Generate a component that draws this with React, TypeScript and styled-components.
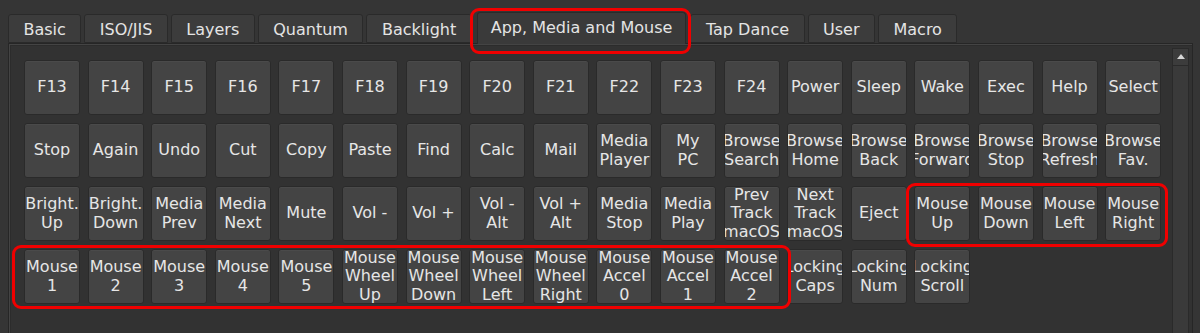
import styled, { createGlobalStyle } from "styled-components";

const GlobalStyle = createGlobalStyle`
  html, body {
    margin: 0;
    padding: 0;
    background: #353535;
  }
  body {
    font-family: "DejaVu Sans", "Liberation Sans", sans-serif;
    font-size: 16px;
    color: #e2e2e2;
    overflow: hidden;
  }
`;

const tabs = [
  "Basic",
  "ISO/JIS",
  "Layers",
  "Quantum",
  "Backlight",
  "App, Media and Mouse",
  "Tap Dance",
  "User",
  "Macro",
];
const activeTab = "App, Media and Mouse";

const keys = [
  "F13", "F14", "F15", "F16", "F17", "F18", "F19", "F20", "F21", "F22", "F23", "F24",
  "Power", "Sleep", "Wake", "Exec", "Help", "Select",
  "Stop", "Again", "Undo", "Cut", "Copy", "Paste", "Find", "Calc", "Mail",
  "Media\nPlayer", "My\nPC", "Browse\nSearch", "Browse\nHome", "Browse\nBack",
  "Browse\nForward", "Browse\nStop", "Browse\nRefresh", "Browse\nFav.",
  "Bright.\nUp", "Bright.\nDown", "Media\nPrev", "Media\nNext", "Mute", "Vol -", "Vol +",
  "Vol -\nAlt", "Vol +\nAlt", "Media\nStop", "Media\nPlay", "Prev\nTrack\nmacOS",
  "Next\nTrack\nmacOS", "Eject", "Mouse\nUp", "Mouse\nDown", "Mouse\nLeft", "Mouse\nRight",
  "Mouse\n1", "Mouse\n2", "Mouse\n3", "Mouse\n4", "Mouse\n5",
  "Mouse\nWheel\nUp", "Mouse\nWheel\nDown", "Mouse\nWheel\nLeft", "Mouse\nWheel\nRight",
  "Mouse\nAccel\n0", "Mouse\nAccel\n1", "Mouse\nAccel\n2",
  "Locking\nCaps", "Locking\nNum", "Locking\nScroll",
];

// red annotation boxes drawn over the screenshot
const highlights = [
  { x: 470, y: 8, w: 221, h: 46 },
  { x: 906, y: 183, w: 262, h: 64 },
  { x: 12, y: 245, w: 779, h: 64 },
];

function App() {
  return (
    <Page>
      <GlobalStyle />
      <TabBar>
        {tabs.map(t => (
          <Tab key={t} $active={t === activeTab}>{t}</Tab>
        ))}
      </TabBar>
      <Panel>
        <KeyGrid>
          {keys.map((k, i) => (
            <Key key={i}>
              <KeyLabel>{k}</KeyLabel>
            </Key>
          ))}
        </KeyGrid>
        <ScrollBar>
          <ScrollArrow />
          <ScrollTrack />
        </ScrollBar>
      </Panel>
      {highlights.map((h, i) => (
        <Highlight key={i} $x={h.x} $y={h.y} $w={h.w} $h={h.h} />
      ))}
    </Page>
  );
}

export default App;

const Page = styled.div`
  position: relative;
  width: 1200px;
  height: 333px;
  padding: 12px 7px 0 8px;
  box-sizing: border-box;
`;

const TabBar = styled.div`
  display: flex;
  align-items: flex-end;
  gap: 3px;
  height: 31px;
  position: relative;
  z-index: 1;
`;

const Tab = styled.div<{ $active?: boolean }>`
  box-sizing: border-box;
  display: flex;
  align-items: center;
  height: ${p => (p.$active ? "32px" : "29px")};
  margin: ${p => (p.$active ? "0 1px -1px 2px" : "0")};
  padding: ${p => (p.$active ? "0 13px 3px" : "2px 14.5px 0")};
  background: ${p => (p.$active ? "#3a3a3a" : "#3c3c3c")};
  border: 1px solid #2a2a2a;
  border-bottom: ${p => (p.$active ? "none" : "1px solid #2a2a2a")};
  border-radius: 3px 3px 0 0;
  color: #e4e4e4;
  white-space: nowrap;
`;

const Panel = styled.div`
  display: flex;
  height: 300px;
  background: #323232;
  border: 1px solid #262626;
  box-shadow: inset 1px 1px 0 #444, inset 2px 2px 0 #2c2c2c;
  padding: 16px 3px 0 15px;
  box-sizing: border-box;
`;

const KeyGrid = styled.div`
  flex: 1;
  display: grid;
  grid-template-columns: repeat(18, 56px);
  grid-auto-rows: 55px;
  column-gap: 7.6px;
  row-gap: 8px;
  align-content: start;
`;

const Key = styled.div`
  box-sizing: border-box;
  display: flex;
  justify-content: center;
  align-items: center;
  overflow: hidden;
  background: #444444;
  border: 1px solid #2a2a2a;
  border-radius: 3px;
  box-shadow: inset 0 1px 0 #4a4a4a;
  color: #e6e6e6;
`;

const KeyLabel = styled.span`
  display: block;
  flex-shrink: 0;
  white-space: pre;
  text-align: center;
  line-height: 18.5px;
`;

const ScrollBar = styled.div`
  width: 17px;
  display: flex;
  flex-direction: column;
  margin-top: -12px;
`;

const ScrollArrow = styled.div`
  position: relative;
  height: 16px;
  background: #3c3c3c;
  border: 1px solid #2a2a2a;
  &::after {
    content: "";
    position: absolute;
    left: 4px;
    top: 5px;
    border-left: 4.5px solid transparent;
    border-right: 4.5px solid transparent;
    border-bottom: 5px solid #d6d6d6;
  }
`;

const ScrollTrack = styled.div`
  flex: 1;
  background: #3a3a3a;
  border: 1px solid #2a2a2a;
  border-top: none;
`;

const Highlight = styled.div<{ $x: number; $y: number; $w: number; $h: number }>`
  position: absolute;
  left: ${p => p.$x}px;
  top: ${p => p.$y}px;
  width: ${p => p.$w}px;
  height: ${p => p.$h}px;
  box-sizing: border-box;
  border: 3px solid #f00000;
  border-radius: 9px;
  pointer-events: none;
  z-index: 2;
`;
